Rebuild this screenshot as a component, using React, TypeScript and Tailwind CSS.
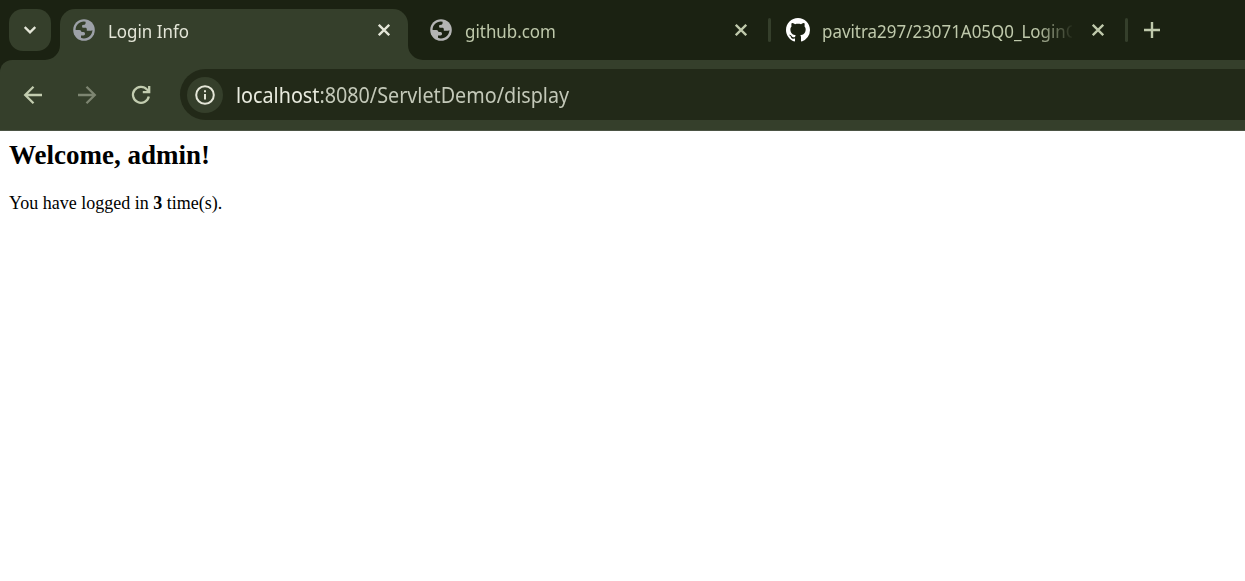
import type { ReactNode } from "react";

function Globe({ className }: { className: string }) {
  return (
    <svg viewBox="0 0 22 22" className={"h-[22px] w-[22px] shrink-0 " + className}>
      <circle cx="11" cy="11" r="10.8" fill="currentColor" />
      <path
        className="fill-[var(--hole)]"
        d="M2.6 11C2.6 6.3 6.2 2.6 10.8 2.6L12.6 2.8V3.9C12.6 5 11.9 5.6 11 5.8L9.1 6.3V7.8C9.1 8.5 9.7 8.8 10.4 8.8H12.3C13.3 8.8 13.8 9.4 13.8 10.2V11.7H17.2C18.5 11.7 19.3 11.5 19.4 11C19.4 15.8 15.7 19.4 11 19.4C9.9 19.4 8.8 19.2 8 18.8V16.5H10.3C11.5 16.5 12 15.8 12 14.8C12 13.7 11.5 13 10.4 13H8.5C8.2 11.8 7.5 11 6.4 11Z"
      />
    </svg>
  );
}

function GitHubMark() {
  return (
    <svg viewBox="0 0 16 16" className="h-6 w-6 shrink-0 fill-white">
      <path d="M8 0C3.58 0 0 3.58 0 8c0 3.54 2.29 6.53 5.47 7.59.4.07.55-.17.55-.38 0-.19-.01-.82-.01-1.49-2.01.37-2.53-.49-2.69-.94-.09-.23-.48-.94-.82-1.13-.28-.15-.68-.52-.01-.53.63-.01 1.08.58 1.23.82.72 1.21 1.87.87 2.33.66.07-.52.28-.87.51-1.07-1.78-.2-3.64-.89-3.64-3.95 0-.87.31-1.59.82-2.15-.08-.2-.36-1.02.08-2.12 0 0 .67-.21 2.2.82.64-.18 1.32-.27 2-.27s1.36.09 2 .27c1.53-1.04 2.2-.82 2.2-.82.44 1.1.16 1.92.08 2.12.51.56.82 1.27.82 2.15 0 3.07-1.87 3.75-3.65 3.95.29.25.54.73.54 1.48 0 1.07-.01 1.93-.01 2.2 0 .21.15.46.55.38A8.01 8.01 0 0 0 16 8c0-4.42-3.58-8-8-8Z" />
    </svg>
  );
}

function Close({ className }: { className: string }) {
  return (
    <svg viewBox="0 0 12 12" className={"h-3 w-3 shrink-0 " + className} fill="none" stroke="currentColor" strokeWidth="2.3">
      <path d="M.8.8l10.4 10.4M11.2.8L.8 11.2" />
    </svg>
  );
}

function NavIcon({ children, className }: { children: ReactNode; className: string }) {
  return (
    <svg viewBox="0 0 24 24" className={"h-6 w-6 shrink-0 " + className} fill="none" stroke="currentColor" strokeWidth="2.3">
      {children}
    </svg>
  );
}

function TabStrip() {
  return (
    <div className="flex h-[60px] bg-[#1b2212] pt-[9px] font-['Noto_Sans',sans-serif] text-[18px] leading-[42px] whitespace-nowrap">
      <div className="relative w-[60px] shrink-0 pl-[9px]">
        <button className="flex h-[42px] w-[42px] items-center justify-center rounded-[14px] bg-[#353f2b] text-[#e4e6d8]">
          <svg viewBox="0 0 12 8" className="h-2 w-3" fill="none" stroke="currentColor" strokeWidth="2.4">
            <path d="M.7 1l5.3 5.3L11.3 1" />
          </svg>
        </button>
        <svg viewBox="0 0 15 15" className="absolute right-0 bottom-0 h-[15px] w-[15px] fill-[#353f2b]">
          <path d="M15 0v15H0A15 15 0 0 0 15 0Z" />
        </svg>
      </div>
      <div className="flex h-[51px] w-[348px] shrink-0 items-start rounded-t-[15px] bg-[#353f2b] pl-[13px] [--hole:#353f2b]">
        <Globe className="mt-[10px] text-[#9da1a8]" />
        <div className="ml-[13px] w-[270px] pt-px text-[#e4e6d8]">
          <span className="inline-block origin-left scale-x-[.94]">Login Info</span>
        </div>
        <Close className="mt-[15px] text-[#e4e6d8]" />
      </div>
      <div className="relative flex w-[360px] shrink-0 items-start pl-[22px] text-[#bfc9ab] [--hole:#1b2212]">
        <svg viewBox="0 0 15 15" className="absolute bottom-0 left-0 h-[15px] w-[15px] fill-[#353f2b]">
          <path d="M0 0v15H15A15 15 0 0 1 0 0Z" />
        </svg>
        <Globe className="mt-[10px] text-[#b4b4b4]" />
        <div className="ml-[13px] w-[270px] pt-px">
          <span className="inline-block origin-left scale-x-[.94]">github.com</span>
        </div>
        <Close className="mt-[15px]" />
      </div>
      <div className="mt-[9px] h-6 w-[3px] shrink-0 rounded-sm bg-[#353f2b]" />
      <div className="flex w-[354px] shrink-0 items-start pl-[15px] text-[#bfc9ab]">
        <div className="mt-[9px] flex"><GitHubMark /></div>
        <div className="ml-3 w-[250px] pt-px [mask-image:linear-gradient(to_right,black_215px,transparent_252px)]">
          <span className="inline-block origin-left scale-x-[.94]">pavitra297/23071A05Q0_LoginC</span>
        </div>
        <Close className="mt-[15px] ml-5" />
      </div>
      <div className="mt-[9px] h-6 w-[3px] shrink-0 rounded-sm bg-[#353f2b]" />
      <svg viewBox="0 0 16 16" className="mt-[13px] ml-4 h-4 w-4 shrink-0 text-[#bfc9ab]" fill="none" stroke="currentColor" strokeWidth="2.4">
        <path d="M8 0v16M0 8h16" />
      </svg>
    </div>
  );
}

function Toolbar() {
  return (
    <div className="bg-[#1b2212]">
      <div className="flex h-[71px] items-start rounded-tl-[12px] border-b border-[#4b5344] bg-[#353f2b] pt-[9px]">
        <div className="flex h-[52px] w-[180px] shrink-0 items-center gap-[30px] pl-[21px]">
          <NavIcon className="text-[#c2ccaf]">
            <path d="M21 12H4.5M12.5 3.7L4.2 12l8.3 8.3" />
          </NavIcon>
          <NavIcon className="text-[#7d8571]">
            <path d="M3 12h16.5M11.5 3.7l8.3 8.3-8.3 8.3" />
          </NavIcon>
          <NavIcon className="text-[#c2ccaf]">
            <path d="M19.8 13.5A8 8 0 1 1 18 6.5l2 2M20.2 3v6.2H13.8" />
          </NavIcon>
        </div>
        <div className="flex h-[51px] flex-1 items-center rounded-l-full bg-[#222918] pl-[7px]">
          <div className="flex h-9 w-9 shrink-0 items-center justify-center rounded-full bg-[#353f2b] text-[#e4e6d8]">
            <svg viewBox="0 0 20 20" className="h-5 w-5" fill="none" stroke="currentColor" strokeWidth="2">
              <circle cx="10" cy="10" r="8.8" />
              <path d="M10 9v5.5M10 5.3v2" />
            </svg>
          </div>
          <div className="ml-[12.5px] origin-left scale-x-[.94] font-['Noto_Sans',sans-serif] text-[21px] leading-[30px] whitespace-nowrap text-[#c3c8b8]">
            <span className="text-[#e9ebdf]">localhost</span>:8080/ServletDemo/display
          </div>
        </div>
      </div>
    </div>
  );
}

export default function App() {
  return (
    <div className="h-[581px] w-[1245px] overflow-hidden bg-white">
      <TabStrip />
      <Toolbar />
      <main className="pt-2 pl-[9px] font-['Liberation_Serif',serif] text-black">
        <h2 className="text-[27px] leading-[32px] font-bold">Welcome, admin!</h2>
        <p className="mt-[22px] text-[18px] leading-5">
          You have logged in <b>3</b> time(s).
        </p>
      </main>
    </div>
  );
}
